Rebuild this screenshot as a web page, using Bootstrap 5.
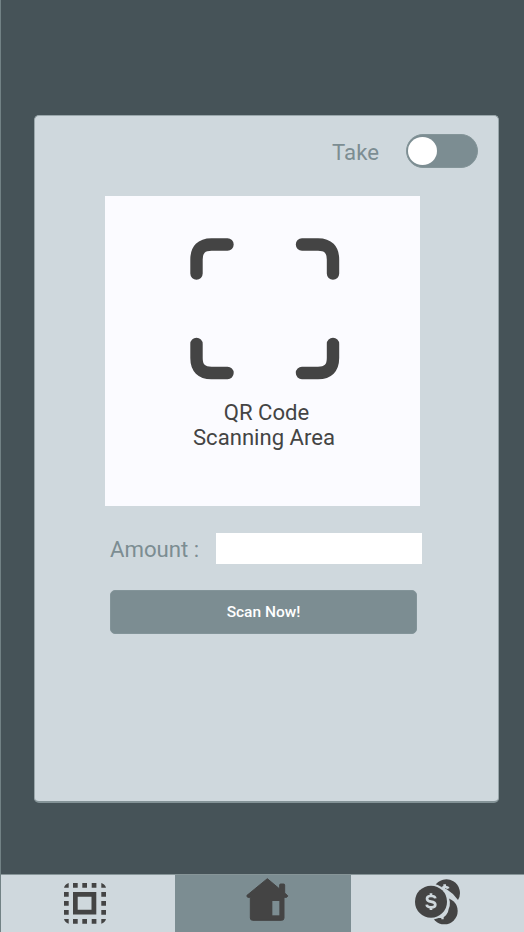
<!DOCTYPE html>
<html lang="en">
<head>
<meta charset="utf-8">
<meta name="viewport" content="width=device-width, initial-scale=1">
<title>Scan</title>
<link rel="stylesheet" href="https://cdn.jsdelivr.net/npm/bootstrap@5.3.0/dist/css/bootstrap.min.css">
<style>
body{font-family:Roboto,sans-serif;background:#465358;color:#444}
.screen{height:932px;border-left:1px solid #728285;padding-top:115px;overflow:hidden}
.panel{width:465px;height:688px;margin-left:33px;background:#cfd8dd;border:1px solid #9aa7ab;border-bottom:2px solid #849397;border-radius:5px}
.label-text{font-size:22.2px;line-height:28px;color:#7c8d92}
.take-row{height:80px;padding:18px 20px 0 0}
.take-row .label-text{margin:4px 27px 0 0}
.form-switch .take-toggle.form-check-input{width:72px;height:34px;margin:0;border:1px solid #849599;border-radius:17px;background-color:#7c8d92;background-image:none;padding:2px 1px}
.take-toggle::before{content:"";display:block;width:29px;height:28px;border-radius:50%;background:#fff}
.scan-area{width:315px;height:310px;margin-left:70px;background:#fbfbff;padding-top:42px}
.scan-area svg{margin-left:84.5px}
.scan-text{font-size:22.1px;line-height:25px;margin:20px 0 0 3px}
.scan-text span{padding-left:5px}
.amount-row{height:31px;margin:27px 0 0 75px}
.amount-row .label-text{width:106px;padding-top:1px}
.amount-row .form-control{width:206px;height:31px;border:0;border-radius:0;background:#fff}
.btn.scan-btn{width:307px;height:44px;margin:26px 0 0 75px;background:#7c8d92;border:1px solid #839499;border-radius:5px;color:#fff;font-size:15.5px;font-weight:500;padding:2px 0 0}
.tabs{height:58px;border-top:1px solid #879598;background:#cfd8dd}
.tab{width:174px}
.tab-active{width:176px;background:#7c8d92}
.select-icon{margin:8px 0 0 63px}
.home-icon{margin:3px 0 0 71px}
.coin-icon{margin-left:64px}
</style>
<script src="https://cdn.jsdelivr.net/npm/bootstrap@5.3.0/dist/js/bootstrap.bundle.min.js"></script>
</head>
<body>
<div class="screen d-flex flex-column">
  <main class="panel flex-shrink-0">
    <div class="take-row d-flex justify-content-end align-items-start">
      <label class="label-text" for="take">Take</label>
      <div class="form-check form-switch p-0 m-0 lh-1"><input class="form-check-input take-toggle" type="checkbox" role="switch" id="take"></div>
    </div>
    <section class="scan-area text-center">
      <svg class="d-block" width="150" height="142" viewBox="0 0 150 142" fill="none" stroke="#444" stroke-width="12.4" stroke-linecap="round" stroke-linejoin="round">
        <path d="M6.500 35.500V21.500Q6.500 6.500 21.500 6.500H37.500M112 6.500H128Q143 6.500 143 21.500V35.500M6.500 106V120Q6.500 135 21.500 135H37.500M112 135H128Q143 135 143 120V106"/>
      </svg>
      <div class="scan-text"><span>QR Code</span><br>Scanning Area</div>
    </section>
    <div class="amount-row d-flex align-items-center">
      <label class="label-text flex-shrink-0" for="amount">Amount :</label>
      <input class="form-control" id="amount" type="text">
    </div>
    <button class="btn scan-btn d-block" type="button">Scan Now!</button>
  </main>
  <nav class="tabs d-flex mt-auto">
    <a class="tab flex-shrink-0" href="#" aria-label="Select">
      <svg class="select-icon d-block" width="42" height="41" viewBox="0 0 42 41" fill="#444">
        <path d="M0 4.700Q1 1 4.700 0V4.700ZM37.300 0Q41 1 42 4.700H37.300ZM0 36H4.700V40.700Q1 39.700 0 36ZM37.300 36H42Q41 39.700 37.300 40.700Z"/>
        <path d="M9 0h4.700v4.700H9zM18.300 0H23v4.700h-4.700zM27.700 0h4.700v4.700h-4.700zM9 36h4.700v4.700H9zM18.300 36H23v4.700h-4.700zM27.700 36h4.700v4.700h-4.700zM0 9h4.700v4.700H0zM0 18h4.700v4.700H0zM0 27h4.700v4.700H0zM37.300 9H42v4.700h-4.700zM37.300 18H42v4.700h-4.700zM37.300 27H42v4.700h-4.700z"/>
        <path fill-rule="evenodd" d="M9 9h23.300v22.400H9zM13.700 13.700v13.100h13.800V13.700z"/>
      </svg>
    </a>
    <a class="tab-active flex-shrink-0" href="#" aria-label="Home">
      <svg class="home-icon d-block" width="44" height="44" viewBox="48 28 132 132">
        <path fill="#444" stroke="#444" stroke-width="3" stroke-linejoin="round" d="M112 30L149 61V49Q149 46 152 46H161Q164 46 164 49V73L173 81Q174 83 170 86H162V148Q162 155 155 155H68Q61 155 61 148V86H54Q49 84 51 80Z"/>
        <path fill="#7c8d92" d="M127 97H148V140H127Z"/>
      </svg>
    </a>
    <a class="tab flex-shrink-0" href="#" aria-label="Money">
      <svg class="coin-icon d-block" width="46" height="50" viewBox="45 21 138 150">
        <circle cx="133" cy="129" r="40" fill="#444"/>
        <path d="M143 84Q155 102 146 123L144 132 138 142 131 148V154H124V150L114 150 120 136Z" fill="#cfd8dd"/>
        <path d="M142 76L174 106L186 94L177 86Z" fill="#cfd8dd"/>
        <path d="M104 54A39 39 0 1 1 174 96Q160 76 140 64Z" fill="#444"/>
        <path d="M124 57L130 54V49H138V53Q147 54 149 60L142 63 135 61 135 65 142 70V76Z" fill="#cfd8dd"/>
        <path d="M138 74Q158 86 176 108" fill="none" stroke="#cfd8dd" stroke-width="6"/>
        <circle cx="93" cy="101" r="54" fill="#cfd8dd"/>
        <circle cx="93" cy="101" r="48" fill="#444"/>
        <path d="M106 91Q105 84 93 84Q81 84 81 92Q81 99 93 101Q106 103 106 110Q106 118 93 118Q81 118 80 110M93 76V85M93 117V126" fill="none" stroke="#cfd8dd" stroke-width="8"/>
      </svg>
    </a>
  </nav>
</div>
</body>
</html>
